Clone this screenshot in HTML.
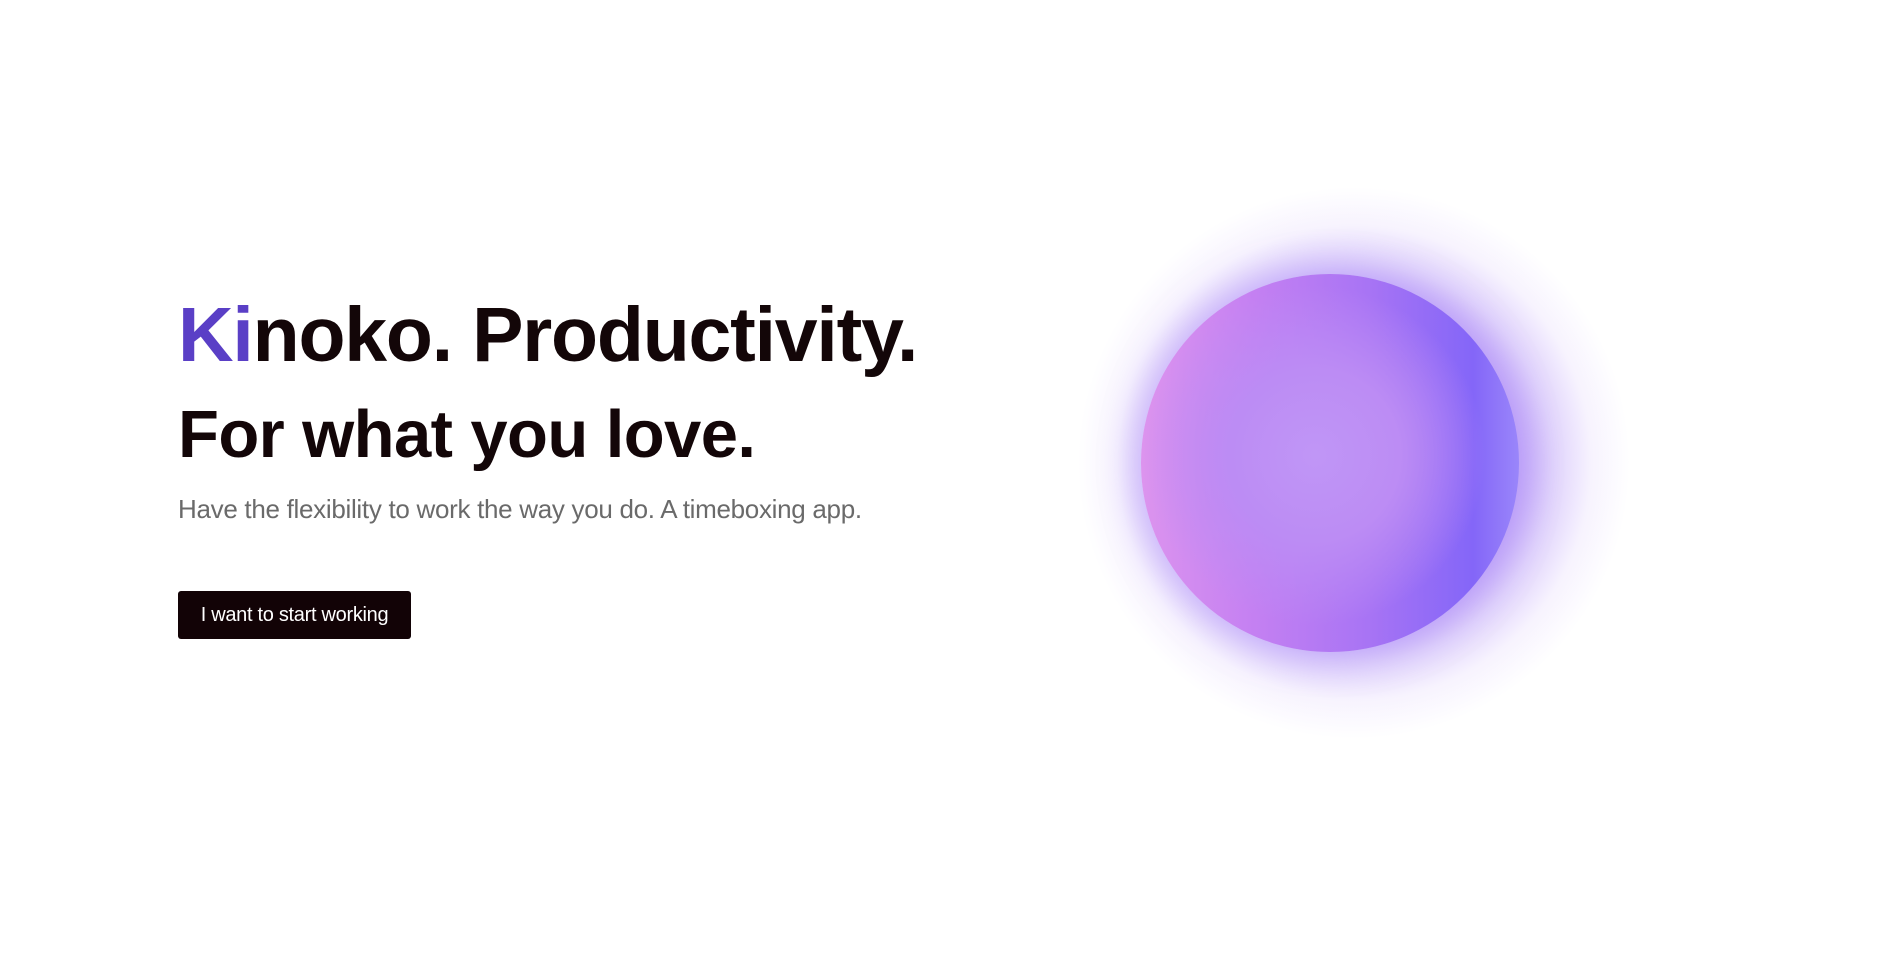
<!DOCTYPE html>
<html><head><style>
html,body{margin:0;padding:0;background:#fff;width:1889px;height:976px;overflow:hidden;font-family:"Liberation Sans",sans-serif;}
.t{position:absolute;left:178px;white-space:nowrap;color:#130608;}
#h1{top:290px;font-size:77px;line-height:90px;letter-spacing:-1.2px;font-weight:bold;}
#h1 span{color:#5a3fc6}
#h2{top:395px;font-size:67px;line-height:80px;letter-spacing:-0.6px;font-weight:bold;}
#sub{top:494px;font-size:26px;line-height:30px;color:#6a6a6a;letter-spacing:-0.3px;}
#btn{position:absolute;left:178px;top:591px;width:233px;height:48px;background:#120306;color:#fff;border-radius:3px;font-size:20px;line-height:48px;text-align:center;letter-spacing:-0.3px;}
#glow{position:absolute;left:1330px;top:463px;width:600px;height:600px;margin:-300px 0 0 -300px;border-radius:50%;
background:radial-gradient(circle closest-side at 54% 50%, rgba(150,110,245,0.7) 0%, rgba(165,125,245,0.65) 60%, rgba(185,155,248,0.45) 72%, rgba(215,195,252,0.2) 86%, rgba(255,255,255,0) 100%);}
#orb{position:absolute;left:1330px;top:463px;width:378px;height:378px;margin:-189px 0 0 -189px;border-radius:50%;
background:radial-gradient(circle at 46% 48%, #c096f6 0%, #bc8cf4 30%, rgba(190,140,244,0) 60%),
linear-gradient(90deg,#dc94ee 0%,#c480f2 30%,#a874f4 60%,#8466f8 88%,#9a86fa 100%);
box-shadow:0 0 30px 10px rgba(180,150,250,0.5);}
</style></head><body>
<div id="glow"></div>
<div id="orb"></div>
<div class="t" id="h1"><span>Ki</span>noko. Productivity.</div>
<div class="t" id="h2">For what you love.</div>
<div class="t" id="sub">Have the flexibility to work the way you do. A timeboxing app.</div>
<div id="btn">I want to start working</div>
</body></html>
